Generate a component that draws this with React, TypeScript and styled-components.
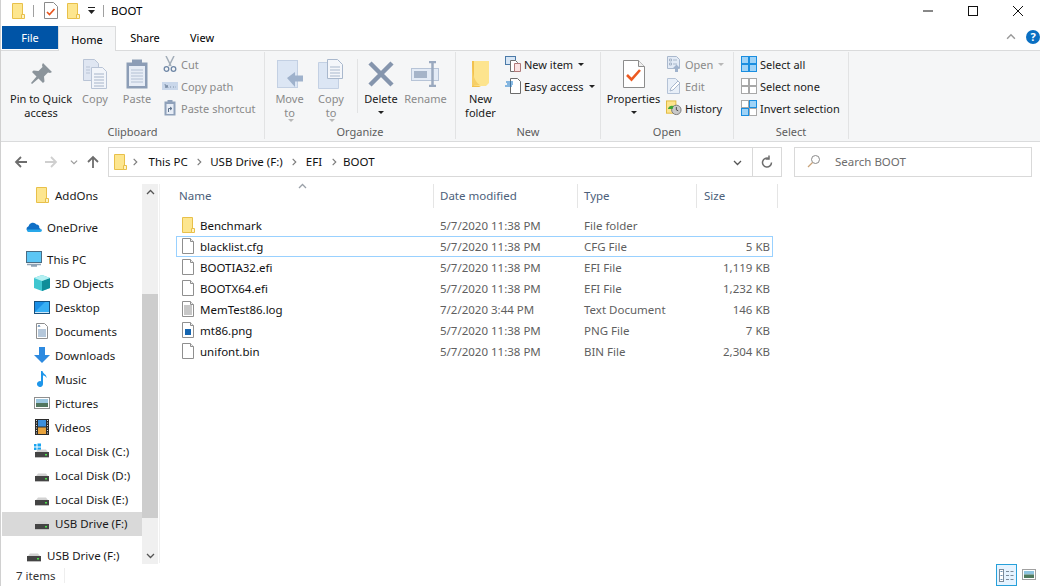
import React from 'react';
import styled, {createGlobalStyle} from 'styled-components';

const GlobalStyle = createGlobalStyle`
  html, body {
    margin: 0;
    padding: 0;
    background: #fff;
    overflow: hidden;
  }
  * {
    box-sizing: border-box;
  }
`;

const Win = styled.div`
  position: relative;
  width: 1040px;
  height: 586px;
  overflow: hidden;
  display: flex;
  flex-direction: column;
  font-family: 'Noto Sans', 'Open Sans', sans-serif;
  font-size: 11.5px;
  color: #000;
  background: #fff;
  border-left: 1px solid #d0d0d0;
`;

// sliver of the window behind, showing past the left edge
const BehindSliver = styled.div`
  position: absolute;
  left: -1px;
  top: 98px;
  width: 1px;
  height: 65px;
  background: #2b3a4a;
`;

const Spacer = styled.span<{$w: number}>`
  flex: none;
  width: ${p => p.$w}px;
`;

const TitleBar = styled.div`
  height: 26px;
  flex: none;
  display: flex;
  align-items: center;
  padding: 0 0 5px 9px;
`;

const TitleSep = styled.div<{$m: number}>`
  width: 1px;
  height: 12px;
  background: #a0a0a0;
  margin: 0 ${p => p.$m}px;
`;

const QuickIcon = styled.span<{$mr?: number}>`
  display: flex;
  margin-right: ${p => p.$mr ?? 0}px;
`;

const TitleText = styled.span`
  font-size: 11.5px;
`;

const WinControls = styled.div`
  margin-left: auto;
  display: flex;
  align-items: center;
  height: 20px;
`;

const WinBtn = styled.div`
  width: 45px;
  display: flex;
  justify-content: center;
  align-items: center;
`;

const TabRow = styled.div`
  height: 24px;
  flex: none;
  display: flex;
  align-items: flex-end;
  padding-left: 1px;
  font-size: 11px;
`;

const FileTab = styled.div`
  width: 56px;
  height: 23px;
  background: #0054a6;
  color: #fff;
  display: flex;
  align-items: center;
  justify-content: center;
  margin-bottom: 1px;
`;

const HomeTab = styled.div`
  width: 58px;
  height: 25px;
  background: #f5f6f7;
  border: 1px solid #dadbdc;
  border-bottom: none;
  display: flex;
  align-items: center;
  justify-content: center;
  margin-bottom: -1px;
  z-index: 1;
`;

const PlainTab = styled.div<{$w: number}>`
  width: ${p => p.$w}px;
  height: 24px;
  display: flex;
  align-items: center;
  justify-content: center;
  margin-bottom: 1px;
`;

const TabRight = styled.div`
  margin-left: auto;
  display: flex;
  align-items: center;
  gap: 10px;
  height: 24px;
  margin-bottom: 1px;
`;

const Ribbon = styled.div`
  height: 92px;
  flex: none;
  background: #f5f6f7;
  border-top: 1px solid #dadbdc;
  border-bottom: 1px solid #dadbdc;
  display: flex;
  padding-top: 1px;
  font-size: 11px;
`;

const Group = styled.div<{$w: number}>`
  width: ${p => p.$w}px;
  height: 87px;
  flex: none;
  border-right: 1px solid #e2e3e4;
  display: flex;
  flex-direction: column;
`;

const GroupBody = styled.div`
  height: 72px;
  display: flex;
  padding-top: 1px;
`;

const GroupLabel = styled.div`
  height: 15px;
  text-align: center;
  color: #5d5d5d;
  line-height: 15px;
`;

const LargeBtn = styled.div<{$w: number; $off?: boolean; $ml?: number}>`
  width: ${p => p.$w}px;
  flex: none;
  margin-left: ${p => p.$ml ?? 0}px;
  display: flex;
  flex-direction: column;
  align-items: center;
  text-align: center;
  line-height: 13.5px;
  white-space: nowrap;
  color: ${p => (p.$off ? '#8a8a8a' : '#1a1a1a')};
`;

const LargeIcon = styled.div`
  height: 39px;
  padding-top: 3px;
  display: flex;
  align-items: center;
  justify-content: center;
`;

const SmallCol = styled.div<{$ml?: number}>`
  display: flex;
  flex-direction: column;
  margin-left: ${p => p.$ml ?? 0}px;
`;

const SmallBtn = styled.div<{$off?: boolean}>`
  height: 22px;
  display: flex;
  align-items: center;
  gap: 3px;
  white-space: nowrap;
  color: ${p => (p.$off ? '#8a8a8a' : '#1a1a1a')};
`;

const SmallIcon = styled.span`
  width: 16px;
  height: 16px;
  display: flex;
  align-items: center;
  justify-content: center;
`;

const Caret = styled.span<{$off?: boolean}>`
  display: inline-block;
  width: 0;
  height: 0;
  border-left: 3px solid transparent;
  border-right: 3px solid transparent;
  border-top: 3px solid ${p => (p.$off ? '#b8b8b8' : '#222')};
  margin-left: 2px;
  vertical-align: middle;
`;

const CaretLine = styled.div`
  height: 13px;
  display: flex;
  align-items: center;
  justify-content: center;
  margin-left: -2px;
`;

const RibbonSep = styled.div`
  width: 1px;
  height: 54px;
  margin: 6px 0 0 9px;
  background: #e2e3e4;
  flex: none;
`;

const AddressRow = styled.div`
  height: 39px;
  flex: none;
  display: flex;
  align-items: center;
  padding-top: 1px;
`;

const NavArrows = styled.div`
  width: 107px;
  flex: none;
  display: flex;
  align-items: center;
  padding-left: 13px;
`;

const AddressBox = styled.div`
  width: 674px;
  height: 30px;
  border: 1px solid #d9d9d9;
  display: flex;
  align-items: center;
  padding-left: 3px;
`;

const Crumb = styled.span<{$l?: number; $r?: number}>`
  margin: 0 ${p => p.$r ?? 7.5}px 2px ${p => p.$l ?? 7.5}px;
  color: #111;
  white-space: nowrap;
`;

const AddressEnd = styled.div`
  margin-left: auto;
  display: flex;
  align-items: center;
  height: 100%;
`;

const EndCell = styled.div<{$w: number; $line?: boolean}>`
  width: ${p => p.$w}px;
  height: 100%;
  display: flex;
  align-items: center;
  justify-content: center;
  border-left: ${p => (p.$line ? '1px solid #d9d9d9' : 'none')};
`;

const SearchBox = styled.div`
  width: 238px;
  height: 30px;
  margin-left: 12px;
  border: 1px solid #d9d9d9;
  display: flex;
  align-items: center;
  gap: 14px;
  padding: 0 0 2px 12px;
  color: #6d6d6d;
`;

const Main = styled.div`
  flex: 1;
  min-height: 0;
  display: flex;
`;

const Sidebar = styled.div`
  width: 141px;
  flex: none;
  overflow: hidden;
  padding-top: 3px;
`;

const NavRow = styled.div<{$root?: boolean; $sel?: boolean; $gap?: boolean}>`
  height: 24px;
  flex: none;
  display: flex;
  align-items: center;
  gap: 5px;
  white-space: nowrap;
  margin-left: 1px;
  padding: 0 0 2px ${p => (p.$root ? 24 : 32)}px;
  margin-top: ${p => (p.$gap ? 8 : 0)}px;
  background: ${p => (p.$sel ? '#d9d9d9' : 'transparent')};
  color: #1a1a1a;
`;

const NavIcon = styled.span`
  width: 16px;
  height: 16px;
  display: flex;
  align-items: center;
  justify-content: center;
`;

const ScrollBar = styled.div`
  width: 16px;
  flex: none;
  background: #f0f0f0;
  margin-top: 3px;
  margin-bottom: -1px;
  display: flex;
  flex-direction: column;
  align-items: center;
`;

const ScrollBtn = styled.div<{$end?: boolean}>`
  height: 17px;
  width: 16px;
  flex: none;
  margin-top: ${p => (p.$end ? 'auto' : '0')};
  display: flex;
  align-items: center;
  justify-content: center;
`;

const ScrollGap = styled.div`
  width: 100%;
  height: 93px;
  flex: none;
`;

const ScrollThumb = styled.div`
  width: 100%;
  height: 224px;
  flex: none;
  background: #cdcdcd;
`;

const ListPane = styled.div`
  flex: 1;
  min-width: 0;
  padding-left: 14px;
  border-left: 1px solid #f0f0f0;
  margin-left: 1px;
  margin-top: 3px;
`;

const HeaderRow = styled.div`
  height: 24px;
  display: grid;
  grid-template-columns: 260px 144px 119px 81px;
  position: relative;
  color: #4c607a;
  margin-bottom: 7px;
`;

const HeaderCell = styled.div<{$pad?: number}>`
  border-right: 1px solid #e5e5e5;
  padding: 0 0 1px ${p => p.$pad ?? 6}px;
  display: flex;
  align-items: center;
`;

const SortArrow = styled.span`
  position: absolute;
  left: 124px;
  top: -2px;
  display: flex;
`;

const FileRow = styled.div<{$focus?: boolean}>`
  height: 21px;
  width: 597px;
  margin-left: 2px;
  display: grid;
  grid-template-columns: 258px 144px 119px 75px;
  align-items: center;
  padding-bottom: 1px;
  border: 1px solid ${p => (p.$focus ? '#99d1ff' : 'transparent')};
`;

const NameCell = styled.div`
  display: flex;
  align-items: center;
  gap: 4px;
  padding-left: 3px;
  color: #111;
`;

const InfoCell = styled.div`
  padding-left: 5px;
  color: #5f5f5f;
`;

const SizeCell = styled.div`
  text-align: right;
  padding-right: 3px;
  color: #5f5f5f;
`;

const StatusBar = styled.div`
  height: 23px;
  flex: none;
  display: flex;
  align-items: center;
  padding-left: 15px;
  color: #333;
`;

const StatusCount = styled.div`
  width: 49px;
  height: 15px;
  line-height: 15px;
  margin-top: 1px;
  border-right: 1px solid #eee;
`;

const ViewBtns = styled.div`
  margin-left: auto;
  display: flex;
  align-items: flex-end;
  height: 100%;
  gap: 5px;
  padding-right: 4px;
`;

const DetailsBtn = styled.div`
  width: 21px;
  height: 22px;
  border: 1px solid #26a0da;
  background: #e5f3ff;
  display: flex;
  align-items: center;
  justify-content: center;
`;

const TilesBtn = styled.div`
  width: 14px;
  height: 20px;
  margin-bottom: 2px;
  display: flex;
  align-items: center;
  justify-content: center;
`;

const ArrowSvg = styled.svg<{$rot: number}>`
  transform: rotate(${p => p.$rot}deg);
`;

// icons, all drawn to match the explorer bitmaps
const Folder = ({size = 16}: {size?: number}) => (
  <svg width={size} height={size} viewBox="0 0 16 16">
    <path d="M2.5 .5h10v15h-10z" fill="#fde68f" stroke="#e8c04a" />
    <path d="M11.5 11.5h3v4h-3z" fill="#fff3c4" stroke="#e8c04a" />
  </svg>
);

const PageCheck = () => (
  <svg width="14" height="17" viewBox="0 0 14 17">
    <path d="M.5.5h9l4 4v12H.5z" fill="#fff" stroke="#8a8a8a" />
    <path d="M3 10l2.5 2.5L10.5 7" fill="none" stroke="#e8561f" strokeWidth="1.7" />
  </svg>
);

const MiniDown = () => (
  <svg width="9" height="9" viewBox="0 0 9 9">
    <path d="M1 1.5h7" stroke="#222" strokeWidth="1" />
    <path d="M1 4h7L4.5 8z" fill="#222" />
  </svg>
);

const Pin = () => (
  <svg width="24" height="24" viewBox="0 0 24 24">
    <path d="M14 1l9 9-2 1-2-.5-4 4 .5 5L14 21l-4.5-4.5L3 22l-1-1 5.5-6.5L3 10l1.5-1.5 5 .5 4-4L13 3z" fill="#8b949b" />
  </svg>
);

const Pages = () => (
  <svg width="26" height="30" viewBox="0 0 26 30">
    <path d="M1.5 .5h11l4 4v17h-15z" fill="#dfe6f2" stroke="#b9c4d6" />
    <path d="M9.5 8.5h11l4 4v17h-15z" fill="#f2f5fa" stroke="#b9c4d6" />
    <path d="M12 15h10M12 18h10M12 21h10M12 24h10M12 27h10" stroke="#a6b4c9" />
    <path d="M4 8h4M4 11h4M4 14h4" stroke="#b9c4d6" />
  </svg>
);

const Clipboard = () => (
  <svg width="22" height="30" viewBox="0 0 22 30">
    <rect x=".5" y="3.5" width="21" height="26" fill="#8c9db6" />
    <rect x="3" y="7" width="16" height="20" fill="#e7edf6" />
    <rect x="6" y=".5" width="10" height="6" fill="#8c9db6" />
    <path d="M5 11h12M5 14h12M5 17h12M5 20h12M5 23h12" stroke="#b3c0d3" />
  </svg>
);

const Scissors = () => (
  <svg width="14" height="16" viewBox="0 0 14 16">
    <path d="M3 0l5 10M11 0L6 10" stroke="#a3aeb9" strokeWidth="1.5" fill="none" />
    <circle cx="3.5" cy="13" r="2.3" fill="none" stroke="#6f87a6" strokeWidth="1.3" />
    <circle cx="10.5" cy="13" r="2.3" fill="none" stroke="#6f87a6" strokeWidth="1.3" />
  </svg>
);

const PathTag = () => (
  <svg width="16" height="8" viewBox="0 0 16 8">
    <rect width="16" height="8" fill="#c9d7ea" />
    <path d="M3 2l1 4 1-3 1 3M8 5h1M11 5h1M13.5 5h.5" stroke="#5f738c" strokeWidth=".7" fill="none" />
  </svg>
);

const ShortcutClip = () => (
  <svg width="12" height="16" viewBox="0 0 12 16">
    <rect x=".5" y="1.5" width="11" height="14" fill="#8fa1ba" />
    <rect x="2.5" y="4" width="7" height="10" fill="#e7edf6" />
    <rect x="3.5" y="0" width="5" height="3" fill="#8fa1ba" />
    <path d="M4.5 12V8.500H8M6 7l2 1.500L6 10" stroke="#5f738c" fill="none" />
  </svg>
);

const MoveTo = () => (
  <svg width="26" height="28" viewBox="0 0 26 28">
    <rect x=".5" y=".5" width="20" height="27" fill="#dce6f4" stroke="#c3d0e3" />
    <path d="M10 18l8-6v3.500h8v6h-8V27z" fill="#9fb2cc" />
  </svg>
);

const CopyTo = () => (
  <svg width="26" height="30" viewBox="0 0 26 30">
    <path d="M.5 3.500h20v26H.5z" fill="#dce6f4" stroke="#c3d0e3" />
    <path d="M9.500 .5h10l5 5v14h-15z" fill="#f4f6fa" stroke="#a9b8cd" />
    <path d="M12 8h10M12 11h10M12 14h10M12 17h10" stroke="#a9b8cd" />
  </svg>
);

const DeleteX = () => (
  <svg width="26" height="26" viewBox="0 0 26 26">
    <path d="M2 2l22 22M24 2L2 24" stroke="#8595ad" strokeWidth="4.5" />
  </svg>
);

const RenameIcon = () => (
  <svg width="29" height="26" viewBox="0 0 29 26">
    <rect x=".5" y="7.5" width="27" height="12" fill="#e3ebf6" stroke="#b7c4d7" />
    <rect x="3" y="10" width="13" height="7" fill="#a5b4c9" />
    <path d="M18 1h7M18 25h7M21.500 1v24" stroke="#9aa9bf" strokeWidth="2.5" />
  </svg>
);

const NewFolderIcon = () => (
  <svg width="20" height="28" viewBox="0 0 20 28">
    <path d="M1 1h9l4 3v20l-6 3H1z" fill="#f2c14e" />
    <path d="M3 1h15v22l-3 3H3z" fill="#fde48e" />
    <path d="M1 1c0 9 1 20 8 24l-8 1z" fill="#f6cf68" />
  </svg>
);

const NewItemIcon = () => (
  <svg width="16" height="16" viewBox="0 0 16 16">
    <rect x=".5" y=".5" width="10" height="8" fill="#d7e6f5" stroke="#4b7aa8" />
    <path d="M5.500 4.500h5l2 2v9h-7z" fill="#fff" stroke="#707070" />
    <path d="M9.500 7.500h6v8h-6z" fill="#fbe3e3" stroke="#b07a7a" />
  </svg>
);

const EasyIcon = () => (
  <svg width="16" height="16" viewBox="0 0 16 16">
    <path d="M5.500 .5h7l3 3v12h-10z" fill="#fff" stroke="#6c6c6c" />
    <path d="M1 4h7M2 6h6M0 8h7" stroke="#1577c9" />
  </svg>
);

const PropsIcon = () => (
  <svg width="22" height="28" viewBox="0 0 22 28">
    <path d="M.5 .5h15l6 6v21H.5z" fill="#fff" stroke="#8c8c8c" />
    <path d="M15.500 .5v6h6" fill="#eee" stroke="#8c8c8c" />
    <path d="M4 15l4.500 4.500L17 10" fill="none" stroke="#ec5a22" strokeWidth="2.6" />
  </svg>
);

const OpenIcon = () => (
  <svg width="14" height="16" viewBox="0 0 14 16">
    <path d="M.5 .5h9l3 3v9H.5z" fill="#e3ebf6" stroke="#a9b8cd" />
    <path d="M2.500 3h2v2h-2zM2.500 7h2v2h-2zM6 4h4M6 8h4" stroke="#9aa9bf" strokeWidth=".8" fill="none" />
    <path d="M8 16v-4H6l3.500-3.500L13 12h-2v4z" fill="#9fb2cc" />
  </svg>
);

const EditIcon = () => (
  <svg width="14" height="16" viewBox="0 0 14 16">
    <path d="M.5 .5h8l4 4v11H.5z" fill="#e8eff8" stroke="#b4c2d6" />
    <path d="M3 13l1-3 7-7 2 2-7 7z" fill="#fff" stroke="#a9b8cd" />
  </svg>
);

const HistoryIcon = () => (
  <svg width="17" height="16" viewBox="0 0 17 16">
    <rect x=".5" y=".5" width="10" height="13" fill="#fde48e" stroke="#e0b83e" />
    <circle cx="11" cy="10" r="5" fill="#c9c9c9" stroke="#777" />
    <path d="M11 7v3l2 1" stroke="#444" fill="none" />
    <path d="M2 9a5 5 0 0 1 6-3l-1 3z" fill="#3fa535" />
  </svg>
);

const SelectGrid = ({fill, line, on}: {fill: string; line: string; on: number[]}) => (
  <svg width="16" height="16" viewBox="0 0 16 16">
    {[0, 1, 2, 3].map(i => (
      <rect
        key={i}
        x={i % 2 ? 8.5 : 0.5}
        y={i > 1 ? 8.5 : 0.5}
        width="7"
        height="7"
        fill={on.includes(i) ? fill : '#fff'}
        stroke={on.includes(i) ? line : '#a8a8a8'}
      />
    ))}
  </svg>
);

const OneDriveIcon = () => (
  <svg width="16" height="12" viewBox="0 0 16 12">
    <path d="M3 11a3 3 0 0 1-.5-5.800A4.500 4.500 0 0 1 10.500 3.500a3.200 3.200 0 0 1 2.800 3.500A2.100 2.100 0 0 1 13.500 11z" fill="#0f6fc6" />
    <path d="M1 8.500h15V9a2 2 0 0 1-2 2H3a2 2 0 0 1-2-2.500z" fill="#28a8ea" />
  </svg>
);

const PCIcon = () => (
  <svg width="16" height="16" viewBox="0 0 16 16">
    <rect x=".5" y=".5" width="15" height="11" fill="#5cc6f5" stroke="#4a6d85" />
    <path d="M1 13.500h14M5 15h6" stroke="#8ea2b5" strokeWidth="1.3" />
  </svg>
);

const ObjectsIcon = () => (
  <svg width="16" height="16" viewBox="0 0 16 16">
    <path d="M8 0l8 3v10l-8 3-8-3V3z" fill="#40c6d0" />
    <path d="M8 6l8-3v10l-8 3z" fill="#0f8d99" />
    <path d="M0 3l8-3 8 3-8 3z" fill="#b5f0f2" />
  </svg>
);

const DesktopIcon = () => (
  <svg width="16" height="13" viewBox="0 0 16 13">
    <rect x=".5" y=".5" width="15" height="12" fill="#1a8fe6" stroke="#16517f" />
    <path d="M1 11L11 1h4v10z" fill="#38b0f5" />
    <path d="M1 11.500h14" stroke="#cfe7f8" />
  </svg>
);

const DocsIcon = () => (
  <svg width="12" height="16" viewBox="0 0 12 16">
    <path d="M.5 .5h8l3 3v12H.5z" fill="#fff" stroke="#8e8e8e" />
    <path d="M2 4l1-2 1 2M2 7h8M2 9h8M2 11h8M2 13h8" stroke="#6b8fb5" fill="none" />
  </svg>
);

const DownloadsIcon = () => (
  <svg width="16" height="16" viewBox="0 0 16 16">
    <path d="M5 0h6v8h5l-8 8-8-8h5z" fill="#2d8ae0" />
  </svg>
);

const MusicIcon = () => (
  <svg width="12" height="16" viewBox="0 0 12 16">
    <path d="M5 0h1.500c.5 3 4.500 3.500 4 7-1-2-2.500-2.500-3.500-2.500V13a3 3 0 1 1-2-2.800z" fill="#1e96ea" />
  </svg>
);

const PicturesIcon = () => (
  <svg width="16" height="12" viewBox="0 0 16 12">
    <rect x=".5" y=".5" width="15" height="11" fill="#fff" stroke="#8f8f8f" />
    <rect x="2" y="2" width="12" height="4" fill="#9cc7e0" />
    <rect x="2" y="6" width="12" height="4" fill="#52765f" />
  </svg>
);

const VideosIcon = () => (
  <svg width="14" height="16" viewBox="0 0 14 16">
    <rect width="14" height="16" fill="#2b2b2b" />
    <rect x="3" y="1" width="8" height="6.5" fill="#3c8fdc" />
    <rect x="3" y="8.5" width="8" height="6.5" fill="#e8a33d" />
    <path d="M1.500 1v14M12.500 1v14" stroke="#ddd" strokeDasharray="1 1.5" />
  </svg>
);

const DiskIcon = ({win}: {win?: boolean}) => (
  <svg width="16" height="16" viewBox="0 0 16 16">
    {win && <path d="M0 1h2.500v2.500H0zM3.500 .5H7v3H3.500zM0 4.500h2.500V7H0zM3.500 4.500H7V8H3.500z" fill="#19a4f0" />}
    <path d="M2 9l2-2.500h8L14 9z" fill="#d2d2d2" />
    <rect x="1" y="9" width="14" height="5" fill="#444" />
    <rect x="11" y="11" width="2" height="1.5" fill="#4ae04a" />
    <path d="M1 14.500h14" stroke="#bdbdbd" />
  </svg>
);

const FileIcon = ({kind}: {kind?: 'text' | 'image'}) => (
  <svg width="12" height="16" viewBox="0 0 12 16">
    <path d="M.5 .5h8l3 3v12H.5z" fill="#fff" stroke="#8f8f8f" />
    <path d="M8.500 .5v3h3" fill="#eee" stroke="#8f8f8f" />
    {kind === 'text' && <path d="M2 5h8M2 7h8M2 9h8M2 11h8M2 13h8" stroke="#8f8f8f" />}
    {kind === 'image' && <rect x="3" y="7" width="6" height="6" fill="#1565b0" />}
  </svg>
);

const Chev = ({dir, color = '#5f5f5f', w = 9}: {dir: 'up' | 'down' | 'right'; color?: string; w?: number}) => {
  const d = dir === 'up' ? 'M1 6l3.500-3.500L8 6' : dir === 'down' ? 'M1 3l3.500 3.500L8 3' : 'M3 1l3.500 3.500L3 8';
  return (
    <svg width={w} height={w} viewBox="0 0 9 9">
      <path d={d} fill="none" stroke={color} strokeWidth="1.3" />
    </svg>
  );
};

const Arrow = ({color, rot = 0}: {color: string; rot?: number}) => (
  <ArrowSvg $rot={rot} width="14" height="14" viewBox="0 0 14 14">
    <path d="M13 7H2M7 2L2 7l5 5" fill="none" stroke={color} strokeWidth="1.8" />
  </ArrowSvg>
);

const files = [
  {name: 'Benchmark', date: '5/7/2020 11:38 PM', type: 'File folder', size: '', icon: 'folder'},
  {name: 'blacklist.cfg', date: '5/7/2020 11:38 PM', type: 'CFG File', size: '5 KB', icon: 'blank', focus: true},
  {name: 'BOOTIA32.efi', date: '5/7/2020 11:38 PM', type: 'EFI File', size: '1,119 KB', icon: 'blank'},
  {name: 'BOOTX64.efi', date: '5/7/2020 11:38 PM', type: 'EFI File', size: '1,232 KB', icon: 'blank'},
  {name: 'MemTest86.log', date: '7/2/2020 3:44 PM', type: 'Text Document', size: '146 KB', icon: 'text'},
  {name: 'mt86.png', date: '5/7/2020 11:38 PM', type: 'PNG File', size: '7 KB', icon: 'image'},
  {name: 'unifont.bin', date: '5/7/2020 11:38 PM', type: 'BIN File', size: '2,304 KB', icon: 'blank'},
];

const fileGlyph = (icon: string) => {
  if (icon === 'folder') return <Folder size={16} />;
  if (icon === 'text') return <FileIcon kind="text" />;
  if (icon === 'image') return <FileIcon kind="image" />;
  return <FileIcon />;
};

export default function App() {
  return (
    <Win>
      <GlobalStyle />
      <BehindSliver />
      <TitleBar>
        <QuickIcon><Folder /></QuickIcon>
        <TitleSep $m={7} />
        <Spacer $w={3} />
        <QuickIcon $mr={7}><PageCheck /></QuickIcon>
        <QuickIcon $mr={6}><Folder /></QuickIcon>
        <QuickIcon><MiniDown /></QuickIcon>
        <TitleSep $m={7} />
        <TitleText>BOOT</TitleText>
        <WinControls>
          <WinBtn>
            <svg width="10" height="10" viewBox="0 0 10 10"><path d="M0 5h10" stroke="#111" /></svg>
          </WinBtn>
          <WinBtn>
            <svg width="10" height="10" viewBox="0 0 10 10"><rect x=".5" y=".5" width="9" height="9" fill="none" stroke="#111" /></svg>
          </WinBtn>
          <WinBtn>
            <svg width="10" height="10" viewBox="0 0 10 10"><path d="M0 0l10 10M10 0L0 10" stroke="#111" /></svg>
          </WinBtn>
        </WinControls>
      </TitleBar>

      <TabRow>
        <FileTab>File</FileTab>
        <HomeTab>Home</HomeTab>
        <PlainTab $w={58}>Share</PlainTab>
        <PlainTab $w={56}>View</PlainTab>
        <TabRight>
          <Chev dir="up" color="#999" w={10} />
          <svg width="14" height="14" viewBox="0 0 14 14">
            <circle cx="7" cy="7" r="7" fill="#0a6fc2" />
            <text x="7" y="11" fontSize="11" fontWeight="700" textAnchor="middle" fill="#fff">?</text>
          </svg>
        </TabRight>
      </TabRow>

      <Ribbon>
        <Group $w={264}>
          <GroupBody>
            <LargeBtn $w={80}>
              <LargeIcon><Pin /></LargeIcon>
              Pin to Quick<br />access
            </LargeBtn>
            <LargeBtn $w={28} $off>
              <LargeIcon><Pages /></LargeIcon>
              Copy
            </LargeBtn>
            <LargeBtn $w={28} $ml={14} $off>
              <LargeIcon><Clipboard /></LargeIcon>
              Paste
            </LargeBtn>
            <SmallCol $ml={11}>
              <SmallBtn $off><SmallIcon><Scissors /></SmallIcon>Cut</SmallBtn>
              <SmallBtn $off><SmallIcon><PathTag /></SmallIcon>Copy path</SmallBtn>
              <SmallBtn $off><SmallIcon><ShortcutClip /></SmallIcon>Paste shortcut</SmallBtn>
            </SmallCol>
          </GroupBody>
          <GroupLabel>Clipboard</GroupLabel>
        </Group>

        <Group $w={191}>
          <GroupBody>
            <LargeBtn $w={49} $off>
              <LargeIcon><MoveTo /></LargeIcon>
              Move<br />to<Caret $off />
            </LargeBtn>
            <LargeBtn $w={34} $off>
              <LargeIcon><CopyTo /></LargeIcon>
              Copy<br />to<Caret $off />
            </LargeBtn>
            <RibbonSep />
            <LargeBtn $w={46}>
              <LargeIcon><DeleteX /></LargeIcon>
              Delete
              <CaretLine><Caret /></CaretLine>
            </LargeBtn>
            <LargeBtn $w={43} $off>
              <LargeIcon><RenameIcon /></LargeIcon>
              Rename
            </LargeBtn>
          </GroupBody>
          <GroupLabel>Organize</GroupLabel>
        </Group>

        <Group $w={145}>
          <GroupBody>
            <LargeBtn $w={49}>
              <LargeIcon><NewFolderIcon /></LargeIcon>
              New<br />folder
            </LargeBtn>
            <SmallCol>
              <SmallBtn><SmallIcon><NewItemIcon /></SmallIcon>New item<Caret /></SmallBtn>
              <SmallBtn><SmallIcon><EasyIcon /></SmallIcon>Easy access<Caret /></SmallBtn>
            </SmallCol>
          </GroupBody>
          <GroupLabel>New</GroupLabel>
        </Group>

        <Group $w={133}>
          <GroupBody>
            <LargeBtn $w={65}>
              <LargeIcon><PropsIcon /></LargeIcon>
              Properties
              <CaretLine><Caret /></CaretLine>
            </LargeBtn>
            <SmallCol>
              <SmallBtn $off><SmallIcon><OpenIcon /></SmallIcon>Open<Caret $off /></SmallBtn>
              <SmallBtn $off><SmallIcon><EditIcon /></SmallIcon>Edit</SmallBtn>
              <SmallBtn><SmallIcon><HistoryIcon /></SmallIcon>History</SmallBtn>
            </SmallCol>
          </GroupBody>
          <GroupLabel>Open</GroupLabel>
        </Group>

        <Group $w={115}>
          <GroupBody>
            <SmallCol $ml={7}>
              <SmallBtn><SmallIcon><SelectGrid fill="#9fd3f7" line="#1a8ee0" on={[0, 1, 2, 3]} /></SmallIcon>Select all</SmallBtn>
              <SmallBtn><SmallIcon><SelectGrid fill="#fff" line="#a8a8a8" on={[]} /></SmallIcon>Select none</SmallBtn>
              <SmallBtn><SmallIcon><SelectGrid fill="#9fd3f7" line="#1a8ee0" on={[1, 2]} /></SmallIcon>Invert selection</SmallBtn>
            </SmallCol>
          </GroupBody>
          <GroupLabel>Select</GroupLabel>
        </Group>
      </Ribbon>

      <AddressRow>
        <NavArrows>
          <Arrow color="#6d6d6d" />
          <Spacer $w={16} />
          <Arrow color="#cfcfcf" rot={180} />
          <Spacer $w={12} />
          <Chev dir="down" color="#9a9a9a" w={8} />
          <Spacer $w={8} />
          <Arrow color="#6d6d6d" rot={90} />
        </NavArrows>
        <AddressBox>
          <Folder />
          <Spacer $w={3} />
          <Chev dir="right" color="#7c7c7c" w={8} />
          <Crumb $l={9.5} $r={7}>This PC</Crumb>
          <Chev dir="right" color="#7c7c7c" w={8} />
          <Crumb>USB Drive (F:)</Crumb>
          <Chev dir="right" color="#7c7c7c" w={8} />
          <Crumb>EFI</Crumb>
          <Chev dir="right" color="#7c7c7c" w={8} />
          <Crumb $l={5.5}>BOOT</Crumb>
          <AddressEnd>
            <EndCell $w={30}><Chev dir="down" color="#555" /></EndCell>
            <EndCell $w={29} $line>
              <svg width="14" height="14" viewBox="0 0 14 14">
                <path d="M11.5 7.500a4.500 4.500 0 1 1-2.500-4" fill="none" stroke="#6d6d6d" strokeWidth="1.5" />
                <path d="M9 .5v3.500H5.500" fill="none" stroke="#6d6d6d" strokeWidth="1.5" />
              </svg>
            </EndCell>
          </AddressEnd>
        </AddressBox>
        <SearchBox>
          <svg width="14" height="14" viewBox="0 0 14 14">
            <circle cx="8.5" cy="5.5" r="4" fill="none" stroke="#8a8a8a" />
            <path d="M5.500 8.500L1 13" stroke="#c9a37a" strokeWidth="1.3" />
          </svg>
          Search BOOT
        </SearchBox>
      </AddressRow>

      <Main>
        <Sidebar>
          <NavRow><NavIcon><Folder /></NavIcon>AddOns</NavRow>
          <NavRow $root $gap><NavIcon><OneDriveIcon /></NavIcon>OneDrive</NavRow>
          <NavRow $root $gap><NavIcon><PCIcon /></NavIcon>This PC</NavRow>
          <NavRow><NavIcon><ObjectsIcon /></NavIcon>3D Objects</NavRow>
          <NavRow><NavIcon><DesktopIcon /></NavIcon>Desktop</NavRow>
          <NavRow><NavIcon><DocsIcon /></NavIcon>Documents</NavRow>
          <NavRow><NavIcon><DownloadsIcon /></NavIcon>Downloads</NavRow>
          <NavRow><NavIcon><MusicIcon /></NavIcon>Music</NavRow>
          <NavRow><NavIcon><PicturesIcon /></NavIcon>Pictures</NavRow>
          <NavRow><NavIcon><VideosIcon /></NavIcon>Videos</NavRow>
          <NavRow><NavIcon><DiskIcon win /></NavIcon>Local Disk (C:)</NavRow>
          <NavRow><NavIcon><DiskIcon /></NavIcon>Local Disk (D:)</NavRow>
          <NavRow><NavIcon><DiskIcon /></NavIcon>Local Disk (E:)</NavRow>
          <NavRow $sel><NavIcon><DiskIcon /></NavIcon>USB Drive (F:)</NavRow>
          <NavRow $root $gap><NavIcon><DiskIcon /></NavIcon>USB Drive (F:)</NavRow>
        </Sidebar>
        <ScrollBar>
          <ScrollBtn><Chev dir="up" color="#555" /></ScrollBtn>
          <ScrollGap />
          <ScrollThumb />
          <ScrollBtn $end><Chev dir="down" color="#555" /></ScrollBtn>
        </ScrollBar>
        <ListPane>
          <HeaderRow>
            <SortArrow><Chev dir="up" color="#9aa0a8" /></SortArrow>
            <HeaderCell $pad={5}>Name</HeaderCell>
            <HeaderCell>Date modified</HeaderCell>
            <HeaderCell>Type</HeaderCell>
            <HeaderCell $pad={7}>Size</HeaderCell>
          </HeaderRow>
          {files.map(f => (
            <FileRow key={f.name} $focus={f.focus}>
              <NameCell>
                <NavIcon>{fileGlyph(f.icon)}</NavIcon>
                {f.name}
              </NameCell>
              <InfoCell>{f.date}</InfoCell>
              <InfoCell>{f.type}</InfoCell>
              <SizeCell>{f.size}</SizeCell>
            </FileRow>
          ))}
        </ListPane>
      </Main>

      <StatusBar>
        <StatusCount>7 items</StatusCount>
        <ViewBtns>
          <DetailsBtn>
            <svg width="15" height="13" viewBox="0 0 15 13">
              <rect x=".5" y=".5" width="4" height="12" fill="#fff" stroke="#7b8a99" />
              <path d="M1.500 2.500h2M1.500 6.500h2M1.500 10.500h2" stroke="#6a8fb0" />
              <path d="M7 2.500h3M11.500 2.500h3M7 6.500h3M11.500 6.500h3M7 10.500h3M11.500 10.500h3" stroke="#7b8a99" />
            </svg>
          </DetailsBtn>
          <TilesBtn>
            <svg width="14" height="11" viewBox="0 0 14 11">
              <rect x=".5" y=".5" width="13" height="10" fill="#fff" stroke="#a0a0a0" />
              <rect x="2" y="2" width="10" height="3.5" fill="#8ec4df" />
              <rect x="2" y="5.5" width="10" height="3.5" fill="#4f7a5e" />
            </svg>
          </TilesBtn>
        </ViewBtns>
      </StatusBar>
    </Win>
  );
}
